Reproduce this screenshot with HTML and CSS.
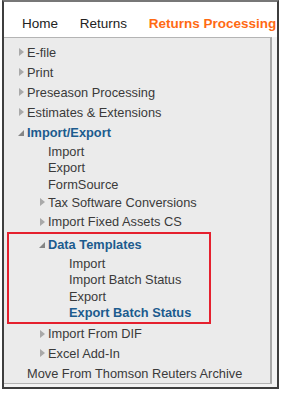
FILE: index.html
```html
<!DOCTYPE html>
<html lang="en">
<head>
    <meta charset="UTF-8">
    <meta name="viewport" content="width=device-width, initial-scale=1.0">
    <title>Returns Processing - Import/Export</title>
    <link rel="stylesheet" href="styles.css">
</head>
<body>
    <div class="frame">
        <div class="tabs">
            <span class="tab">Home</span>
            <span class="tab">Returns</span>
            <span class="tab active">Returns Processing</span>
        </div>
        <div class="body">
            <div class="panel">
                <ul class="tree">
                    <li class="node closed"><span class="arrow"></span>E-file</li>
                    <li class="node closed"><span class="arrow"></span>Print</li>
                    <li class="node closed"><span class="arrow"></span>Preseason Processing</li>
                    <li class="node closed"><span class="arrow"></span>Estimates &amp; Extensions</li>
                    <li class="node open current"><span class="arrow"></span>Import/Export</li>
                    <li>
                        <ul class="tree">
                            <li class="leaf"><span class="arrow"></span>Import</li>
                            <li class="leaf"><span class="arrow"></span>Export</li>
                            <li class="leaf"><span class="arrow"></span>FormSource</li>
                            <li class="node closed"><span class="arrow"></span>Tax Software Conversions</li>
                            <li class="node closed"><span class="arrow"></span>Import Fixed Assets CS</li>
                            <li class="highlight">
                                <ul class="tree flat">
                                    <li class="node open current"><span class="arrow"></span>Data Templates</li>
                                    <li>
                                        <ul class="tree">
                                            <li class="leaf"><span class="arrow"></span>Import</li>
                                            <li class="leaf"><span class="arrow"></span>Import Batch Status</li>
                                            <li class="leaf"><span class="arrow"></span>Export</li>
                                            <li class="leaf current"><span class="arrow"></span>Export Batch Status</li>
                                        </ul>
                                    </li>
                                </ul>
                            </li>
                            <li class="node closed"><span class="arrow"></span>Import From DIF</li>
                            <li class="node closed"><span class="arrow"></span>Excel Add-In</li>
                        </ul>
                    </li>
                    <li class="node"><span class="arrow"></span>Move From Thomson Reuters Archive</li>
                </ul>
            </div>
            <div class="gutter"></div>
        </div>
    </div>
</body>
</html>
```

FILE: styles.css
```css
body {
    margin: 0;
    background: white;
    font-family: "Liberation Sans", Arial, sans-serif;
}
.frame {
    width: 277px;
    height: 389px;
    margin-left: 2px;
    box-sizing: border-box;
    border: 2px solid #3e3e3e;
    border-top-color: #777;
    display: flex;
    flex-direction: column;
    overflow: hidden;
}
.tabs {
    height: 37px;
    box-sizing: border-box;
    padding: 13px 0 0 18px;
    background: white;
    white-space: nowrap;
    font-size: 13.5px;
    line-height: 18px;
    color: #222;
}
.tab {
    margin-right: 18px;
}
.tab.active {
    color: #ff6a13;
    font-weight: bold;
}
.body {
    flex: 1;
    display: flex;
    background: #f3f3f3;
    padding-bottom: 3px;
}
.panel {
    flex: 1;
    background: #ebebeb;
    border-top: 1px solid #b4b4b4;
    border-right: 2px solid #a8a8a8;
    border-bottom: 1px solid #b4b4b4;
    padding: 4px 0 0 14px;
}
.gutter {
    width: 5px;
}
.tree {
    list-style: none;
    margin: 0;
    padding: 0;
    font-size: 12.8px;
    color: #3a3a3a;
}
.tree .tree {
    padding-left: 21px;
    margin-top: 1px;
}
.tree.flat {
    padding-left: 0;
    margin-top: 0;
}
.node, .leaf {
    display: flex;
    align-items: center;
    white-space: nowrap;
}
.node {
    height: 20px;
}
.tree .tree .node {
    height: 19.5px;
}
.leaf {
    height: 16.5px;
}
.current {
    color: #1c5b8e;
    font-weight: bold;
}
.arrow {
    width: 9px;
    flex: none;
    position: relative;
    height: 10px;
}
.closed .arrow::before {
    content: "";
    position: absolute;
    left: 1px;
    top: 1px;
    border-left: 5px solid #a9a9a9;
    border-top: 4px solid transparent;
    border-bottom: 4px solid transparent;
}
.open .arrow::before {
    content: "";
    position: absolute;
    left: 0;
    top: 3px;
    border-right: 6px solid #858585;
    border-top: 6px solid transparent;
}
.highlight {
    width: 204px;
    box-sizing: border-box;
    margin: 0 0 0 -32px;
    padding: 1px 0 1px 30px;
    border: 2px solid #e5202e;
}
```
